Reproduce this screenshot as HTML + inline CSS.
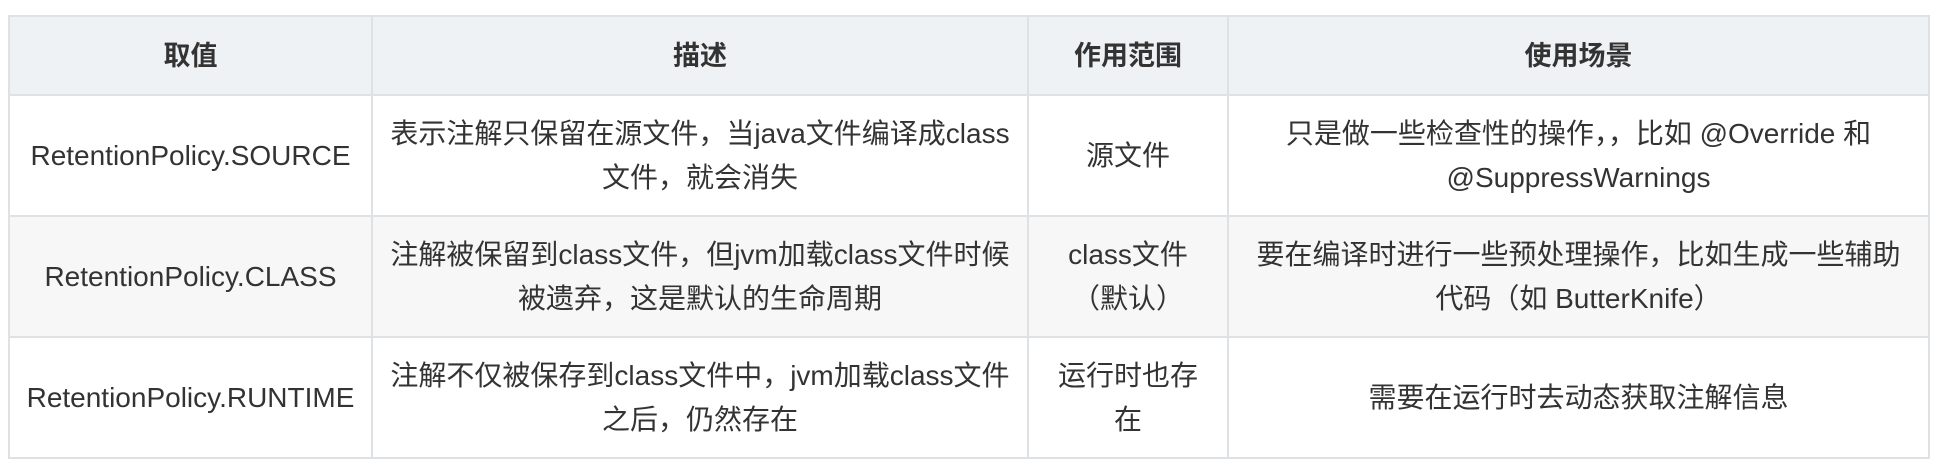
<!DOCTYPE html>
<html><head><meta charset="utf-8"><style>
html,body{margin:0;padding:0;background:#fff;width:1938px;height:468px;overflow:hidden}
table{position:absolute;left:8px;top:15px;border-collapse:collapse;font-family:"Liberation Sans","Noto Sans CJK SC",sans-serif;font-size:28px;color:#333;line-height:44px}
td,th{border:2px solid #dfe2e5;text-align:center;padding:0 4px;box-sizing:border-box;white-space:nowrap}
th{background:#eff2f5;font-weight:bold;height:79px;font-size:27px}
tr.r td{height:121px}
tr.g td{background:#f7f7f7}
</style></head><body>
<table>
<colgroup><col style="width:363px"><col style="width:656px"><col style="width:200px"><col style="width:701px"></colgroup>
<tr><th>取值</th><th>描述</th><th>作用范围</th><th>使用场景</th></tr>
<tr class="r"><td>RetentionPolicy.SOURCE</td><td>表示注解只保留在源文件，当java文件编译成class<br>文件，就会消失</td><td>源文件</td><td>只是做一些检查性的操作，，比如 @Override 和<br>@SuppressWarnings</td></tr>
<tr class="r g"><td>RetentionPolicy.CLASS</td><td>注解被保留到class文件，但jvm加载class文件时候<br>被遗弃，这是默认的生命周期</td><td>class文件<br>（默认）</td><td>要在编译时进行一些预处理操作，比如生成一些辅助<br>代码（如 ButterKnife）</td></tr>
<tr class="r"><td>RetentionPolicy.RUNTIME</td><td>注解不仅被保存到class文件中，jvm加载class文件<br>之后，仍然存在</td><td>运行时也存<br>在</td><td>需要在运行时去动态获取注解信息</td></tr>
</table>
</body></html>
